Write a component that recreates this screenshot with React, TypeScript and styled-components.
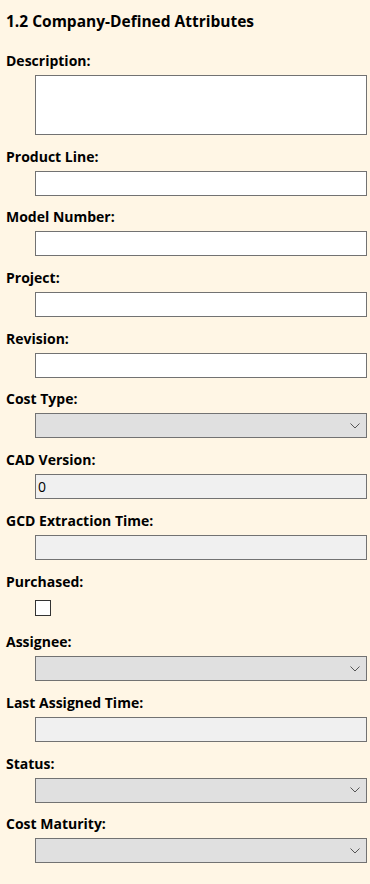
import React from "react";
import styled, { createGlobalStyle } from "styled-components";

const Global = createGlobalStyle`
  html, body { margin: 0; padding: 0; background: #fff6e5; }
  body { font-family: "Open Sans", "Noto Sans", sans-serif; color: #000; }
  * { box-sizing: border-box; }
`;

const Page = styled.div`
  background: #fff6e5;
  min-height: 884px;
  padding: 9px 3px 0 6px;
`;

const Title = styled.h2`
  margin: 0 0 18px 0;
  font-size: 15.5px;
  line-height: 24px;
  font-weight: 700;
`;

const Field = styled.div`
  display: flex;
  flex-direction: column;
  margin-bottom: 11.7px;
`;

const Label = styled.label`
  font-size: 14px;
  font-weight: 700;
  line-height: 20px;
  margin-bottom: 4px;
`;

const Control = styled.div`
  margin-left: 29px;
`;

const TextBox = styled.div<{ $bg?: string; $h?: number }>`
  height: ${(p) => p.$h ?? 25}px;
  border: 1px solid #727272;
  background: ${(p) => p.$bg ?? "#ffffff"};
  font-size: 14px;
  line-height: 23px;
  padding-left: 2px;
  font-family: "Open Sans", sans-serif;
`;

const Select = styled.div`
  height: 25px;
  border: 1px solid #727272;
  background: #e0e0e0;
  display: flex;
  align-items: center;
  justify-content: flex-end;
  padding-right: 6px;
`;

const CheckRow = styled.div`
  height: 25px;
  padding-top: 4px;
`;

const Check = styled.div`
  width: 16px;
  height: 16px;
  border: 1px solid #333333;
  background: #ffffff;
`;

const Chevron = () => (
  <svg width="10" height="6" viewBox="0 0 10 6">
    <path d="M0.5 0.5 L5 5 L9.5 0.5" fill="none" stroke="#555" strokeWidth="1" />
  </svg>
);

type Kind = "text" | "area" | "select" | "readonly" | "check";

const fields: { label: string; kind: Kind; value?: string }[] = [
  { label: "Description:", kind: "area" },
  { label: "Product Line:", kind: "text" },
  { label: "Model Number:", kind: "text" },
  { label: "Project:", kind: "text" },
  { label: "Revision:", kind: "text" },
  { label: "Cost Type:", kind: "select" },
  { label: "CAD Version:", kind: "readonly", value: "0" },
  { label: "GCD Extraction Time:", kind: "readonly" },
  { label: "Purchased:", kind: "check" },
  { label: "Assignee:", kind: "select" },
  { label: "Last Assigned Time:", kind: "readonly" },
  { label: "Status:", kind: "select" },
  { label: "Cost Maturity:", kind: "select" },
];

function renderControl(kind: Kind, value?: string) {
  switch (kind) {
    case "area":
      return <TextBox $h={60} />;
    case "text":
      return <TextBox />;
    case "readonly":
      return <TextBox $bg="#f0f0f0">{value}</TextBox>;
    case "select":
      return (
        <Select>
          <Chevron />
        </Select>
      );
    case "check":
      return (
        <CheckRow>
          <Check />
        </CheckRow>
      );
  }
}

export default function App() {
  return (
    <>
      <Global />
      <Page>
        <Title>1.2 Company-Defined Attributes</Title>
        {fields.map((f) => (
          <Field key={f.label}>
            <Label>{f.label}</Label>
            <Control>{renderControl(f.kind, f.value)}</Control>
          </Field>
        ))}
      </Page>
    </>
  );
}
